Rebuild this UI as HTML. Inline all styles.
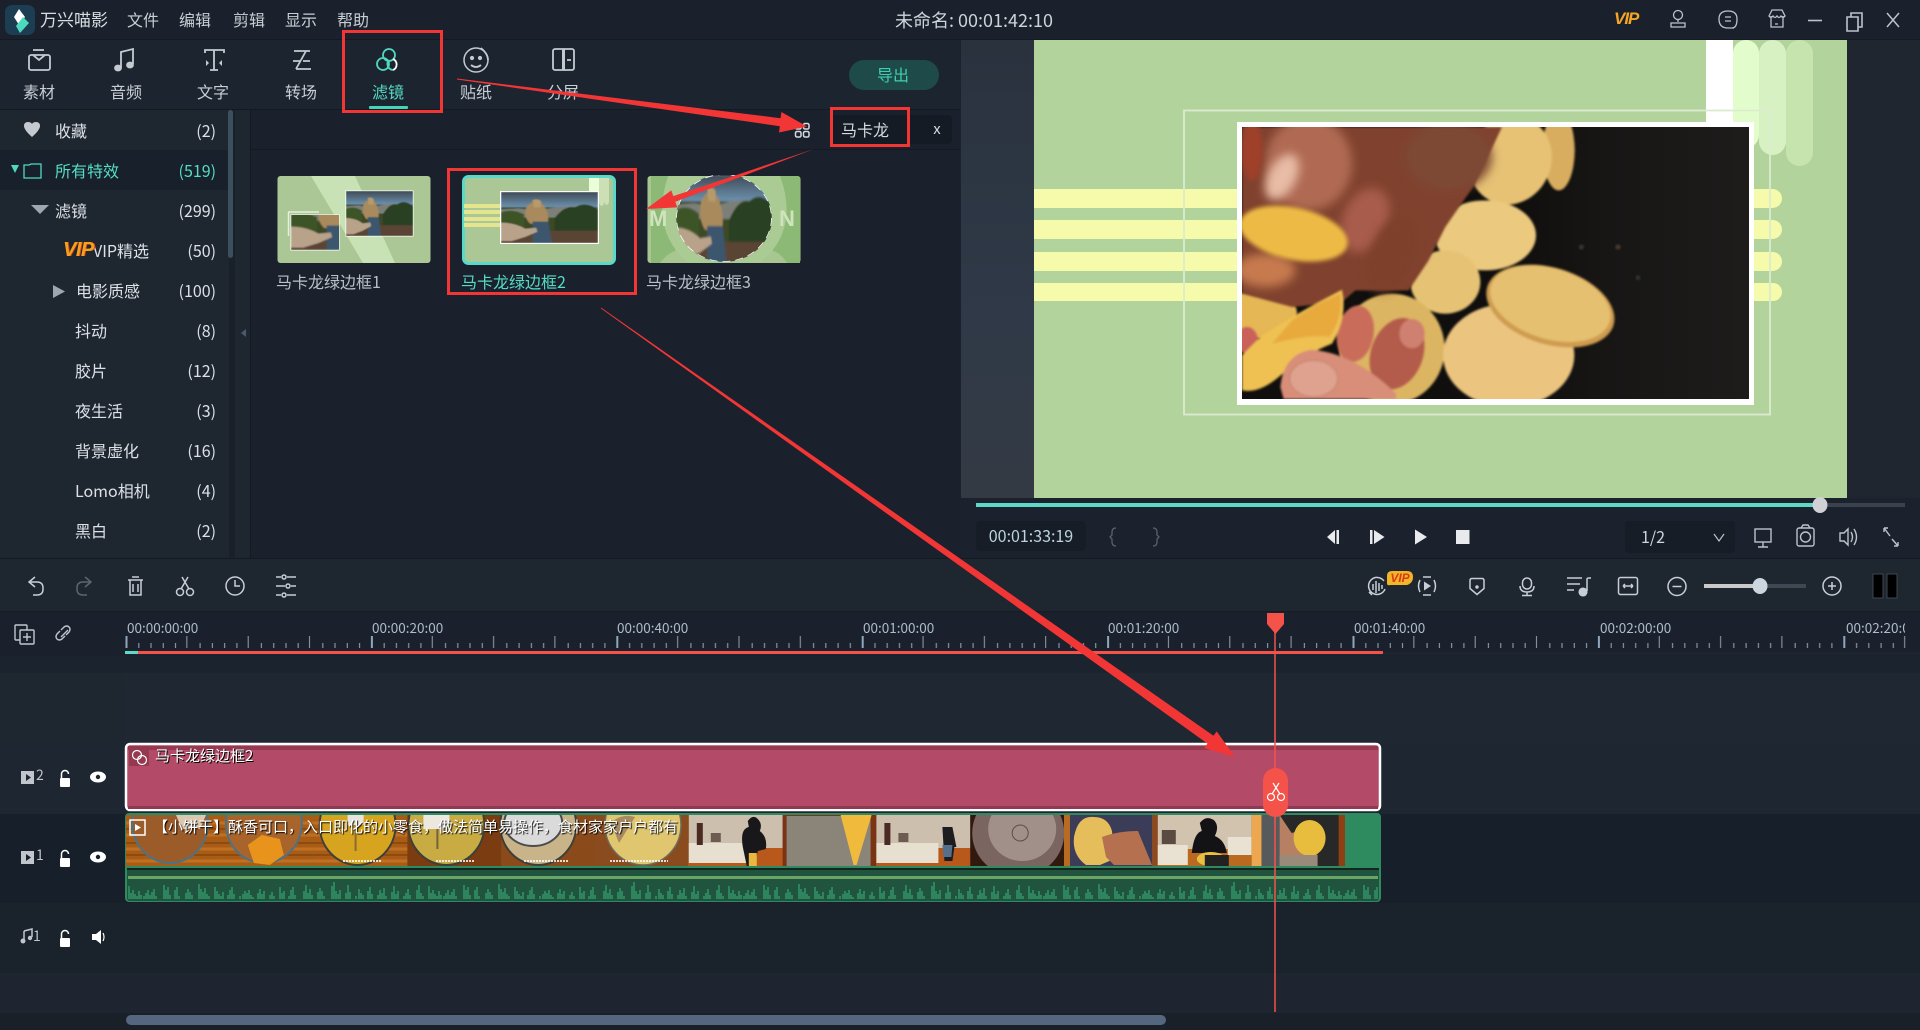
<!DOCTYPE html>
<html lang="zh"><head><meta charset="utf-8"><title>万兴喵影</title>
<style>
html,body{margin:0;padding:0;width:1920px;height:1030px;overflow:hidden;background:#1c232d}
body{font-family:"Noto Sans CJK SC","Liberation Sans",sans-serif;color:#c9ced5;position:relative}
svg{position:absolute;left:0;top:0}
.t{position:absolute;white-space:nowrap;line-height:20px;font-size:16px}
.c{transform:translateX(-50%)}
.r{transform:translateX(-100%)}
.m{color:#c9ced5}
.s{color:#dde1e6;font-size:16px}
.g{color:#55dcc4}
.rl{color:#aebccb;font-size:13.5px}
</style></head><body>
<svg width="1920" height="1030" viewBox="0 0 1920 1030">
<defs>
<filter id="b8" x="-50%" y="-50%" width="200%" height="200%"><feGaussianBlur stdDeviation="14"/></filter>
<filter id="b5" x="-30%" y="-30%" width="160%" height="160%"><feGaussianBlur stdDeviation="6"/></filter>
<filter id="b2" x="-10%" y="-10%" width="120%" height="120%"><feGaussianBlur stdDeviation="3"/></filter>
<filter id="b1" x="-10%" y="-10%" width="120%" height="120%"><feGaussianBlur stdDeviation="1.200"/></filter>
<clipPath id="strip"><rect x="126" y="815" width="1219" height="51"/></clipPath>
<linearGradient id="slate" x1="0" y1="0" x2="1" y2="0"><stop offset=".55" stop-color="#100f0e"/><stop offset=".72" stop-color="#171615"/><stop offset="1" stop-color="#1d1c1b"/></linearGradient>
<pattern id="ticks" patternUnits="userSpaceOnUse" x="125.5" y="636" width="245.4" height="12">
<path d="M1 0V12" stroke="#8fa6bb" stroke-width="2"/>
<path d="M61.35 0V12M122.7 0V12M184 0V12" stroke="#93a0ad" stroke-width="1"/>
<path d="M13.3 7V12M25.5 7V12M37.8 7V12M50 7V12M74.6 7V12M86.9 7V12M99.1 7V12M111.4 7V12M135.9 7V12M148.2 7V12M160.5 7V12M172.7 7V12M197.3 7V12M209.5 7V12M221.8 7V12M234 7V12" stroke="#8494a3" stroke-width="1.2"/>
</pattern>
<pattern id="wave" patternUnits="userSpaceOnUse" x="128" y="877" width="300" height="22">
<path d="M1 22v-13M3 22v-6M5 22v-9M7 22v-5M9 22v-3M11 22v-8M13 22v-4M16 22v-3M18 22v-6M20 22v-9M22 22v-4M24 22v-7M26 22v-10M28 22v-3M36 22v-14M38 22v-9M40 22v-12M42 22v-4M47 22v-9M49 22v-12M51 22v-3M58 22v-6M60 22v-10M62 22v-7M64 22v-4M71 22v-15M73 22v-10M75 22v-7M77 22v-11M79 22v-5M81 22v-3M87 22v-12M89 22v-8M91 22v-5M93 22v-3M95 22v-7M100 22v-4M102 22v-9M104 22v-12M106 22v-5M112 22v-3M115 22v-5M117 22v-8M119 22v-6M121 22v-9M123 22v-4M125 22v-2M130 22v-6M132 22v-10M134 22v-5M136 22v-8M142 22v-4M144 22v-7M146 22v-3M152 22v-12M154 22v-6M156 22v-8M161 22v-3M163 22v-9M165 22v-12M167 22v-4M176 22v-8M178 22v-14M180 22v-6M182 22v-10M184 22v-4M190 22v-7M192 22v-11M194 22v-8M196 22v-3M204 22v-13M206 22v-17M208 22v-8M210 22v-5M212 22v-9M218 22v-6M220 22v-14M222 22v-7M228 22v-3M231 22v-10M233 22v-6M235 22v-4M240 22v-8M242 22v-12M244 22v-5M250 22v-4M252 22v-9M254 22v-6M256 22v-11M258 22v-3M264 22v-7M266 22v-13M268 22v-5M270 22v-8M276 22v-3M278 22v-6M280 22v-10M282 22v-4M289 22v-9M291 22v-14M293 22v-6M295 22v-3" stroke="#2f8a60" stroke-width="1.800" fill="none"/>
</pattern>
<linearGradient id="sky" x1="0" y1="0" x2="0" y2="1"><stop offset="0" stop-color="#3f4a55"/><stop offset="1" stop-color="#6f97b5"/></linearGradient>
<symbol id="scene" viewBox="0 0 160 100" preserveAspectRatio="none">
<g filter="url(#b1)">
<rect width="160" height="32" fill="url(#sky)"/>
<rect y="30" width="160" height="70" fill="#3c4a28"/>
<path d="M0 34L30 32 60 36 90 30 120 28 160 32V50H0Z" fill="#7c7f78"/>
<path d="M88 52Q104 26 122 30Q140 18 160 34V82H88Z" fill="#2c4120"/>
<path d="M0 40Q18 32 38 44V70H0Z" fill="#3d5428"/>
<rect y="76" width="160" height="24" fill="#5a4534"/>
<path d="M42 30Q56 10 70 26Q82 44 76 66L48 62Q36 48 42 30Z" fill="#a98a5c"/>
<path d="M52 16Q60 12 66 18V30H54Z" fill="#b79a6a"/>
<path d="M52 58H78L84 100H52Z" fill="#3b566d"/>
<path d="M0 60Q22 60 40 72L58 70 60 78 40 88 18 96 0 96Z" fill="#b8a28a"/>
</g>
</symbol>
<symbol id="wood" viewBox="0 0 94 51">
<rect width="94" height="51" fill="#a95c16"/>
<path d="M0 8H94M0 20H94M0 34H94M0 46H94" stroke="#bf7022" stroke-width="3"/>
<path d="M0 14H94M0 28H94M0 40H94" stroke="#8f4a10" stroke-width="2"/>
</symbol>
</defs>

<!-- base regions -->
<rect width="1920" height="40" fill="#1a212c"/>
<rect y="40" width="960" height="70" fill="#1c2430"/>
<rect y="110" width="229" height="448" fill="#1e2630"/>
<rect x="229" y="110" width="6" height="448" fill="#1a2029"/>
<rect x="235" y="110" width="16" height="448" fill="#1e2630"/>
<rect x="251" y="110" width="709" height="448" fill="#1a212c"/>
<path d="M251 149.500H960M0 109.500H960M0 39.500H1920M250.500 110V558M0 558.500H1920" stroke="#141a22" stroke-width="1"/>
<rect y="150" width="229" height="40" fill="#18212b"/>
<rect x="228" y="110" width="5" height="148" rx="2.500" fill="#3c4f5f"/>
<path d="M246 329v8l-5-4z" fill="#4a5a6c"/>

<!-- preview -->
<rect x="960" y="40" width="960" height="518" fill="#1b222d"/>
<rect x="1847" y="40" width="73" height="458" fill="#1f2630"/>
<defs><linearGradient id="st" x1="0" y1="0" x2="0" y2="1"><stop offset="0" stop-color="#2a323e"/><stop offset=".6" stop-color="#2f3947"/><stop offset="1" stop-color="#343a44"/></linearGradient></defs>
<rect x="961" y="40" width="73" height="458" fill="url(#st)"/>
<rect x="1034" y="40" width="813" height="458" fill="#b3d39d"/>
<rect x="1786" y="40" width="27" height="126" rx="13.500" fill="#c5e4ae"/>
<rect x="1759" y="40" width="27" height="115" rx="13.500" fill="#d8f1c2"/>
<rect x="1733" y="40" width="26" height="108" rx="13" fill="#e3fccb"/>
<rect x="1706" y="40" width="27" height="90" fill="#fff"/>
<g fill="#f5fbaa"><path d="M1034 189H1772.500a9.500 9.500 0 0 1 0 19H1034Z"/><path d="M1034 220H1772.500a9.500 9.500 0 0 1 0 19H1034Z"/><path d="M1034 252H1772.500a9.500 9.500 0 0 1 0 19H1034Z"/><path d="M1034 283H1773a9 9 0 0 1 0 18H1034Z"/></g>
<rect x="1184" y="110.500" width="586" height="304" fill="none" stroke="#dcebd0" stroke-width="1.800"/>
<rect x="1237" y="122" width="517" height="283" fill="#fff"/>
<svg x="1242" y="127" width="507" height="272" viewBox="0 0 1521 816" preserveAspectRatio="none">
<rect width="1521" height="816" fill="url(#slate)"/>
<g filter="url(#b2)">
<ellipse cx="950" cy="70" rx="48" ry="120" fill="#d9ad5e"/>
<ellipse cx="805" cy="100" rx="122" ry="135" fill="#e7c274" transform="rotate(25 805 100)"/>
<ellipse cx="730" cy="325" rx="152" ry="105" fill="#ebc97f"/>
<ellipse cx="610" cy="465" rx="105" ry="95" fill="#e6c275"/>
<ellipse cx="450" cy="665" rx="158" ry="165" fill="#dcb564"/>
<ellipse cx="800" cy="685" rx="197" ry="155" fill="#ebc47f"/>
<ellipse cx="925" cy="537" rx="198" ry="115" fill="#cf9c50" transform="rotate(17 925 537)"/>
<ellipse cx="925" cy="530" rx="186" ry="106" fill="#e5c06f" transform="rotate(17 925 530)"/>
<ellipse cx="60" cy="560" rx="105" ry="75" fill="#e5b755"/>
</g>
<path d="M0 0H780L700 170 610 300 560 400 500 490H340L300 525 150 540 0 500Z" fill="#80432f" filter="url(#b2)"/>
<ellipse cx="620" cy="90" rx="130" ry="100" fill="#7d4a36" filter="url(#b8)"/>
<ellipse cx="200" cy="110" rx="130" ry="140" fill="#b06a52" filter="url(#b8)"/>
<ellipse cx="30" cy="70" rx="32" ry="90" fill="#9e3f2b" filter="url(#b5)"/>
<ellipse cx="120" cy="150" rx="42" ry="75" fill="#e8bca6" transform="rotate(28 120 150)" filter="url(#b8)"/>
<ellipse cx="370" cy="280" rx="68" ry="100" fill="#a85c4b" transform="rotate(22 370 280)" filter="url(#b8)"/>
<ellipse cx="450" cy="380" rx="65" ry="120" fill="#7e3f2c" transform="rotate(22 450 380)" filter="url(#b8)"/>
<ellipse cx="70" cy="430" rx="90" ry="50" fill="#c67a4e" filter="url(#b8)"/>
<ellipse cx="155" cy="320" rx="165" ry="78" fill="#edbb45" transform="rotate(12 155 320)" filter="url(#b5)"/>
<g filter="url(#b2)">
<ellipse cx="15" cy="640" rx="32" ry="40" fill="#c9605a"/>
<ellipse cx="340" cy="620" rx="55" ry="85" fill="#c96d5a" transform="rotate(10 340 620)"/>
<ellipse cx="465" cy="680" rx="78" ry="110" fill="#b45b4c" transform="rotate(20 465 680)"/>
<ellipse cx="510" cy="620" rx="38" ry="44" fill="#cf8070"/>
<path d="M300 488Q318 570 270 650Q190 680 110 750Q50 800 0 790V685L60 625 150 570 220 530Z" fill="#efc152"/>
<path d="M295 500Q305 570 262 630 210 620 90 650L150 580 220 535Z" fill="#e8aa3c"/>
<path d="M115 780Q125 680 210 668 340 680 462 800V816H125Z" fill="#d88e78"/>
<ellipse cx="215" cy="755" rx="72" ry="55" fill="#dfa28e" stroke="#c98a76" stroke-width="4"/>
</g>
<circle cx="1018" cy="360" r="8" fill="#3a3330" filter="url(#b2)"/><circle cx="1128" cy="360" r="8" fill="#4a3a2c" filter="url(#b2)"/><circle cx="1188" cy="452" r="7" fill="#3a3330" filter="url(#b2)"/>
</svg>

<!-- player bar -->
<rect x="976" y="503" width="929" height="4" fill="#3a424e"/>
<rect x="976" y="503" width="844" height="4" fill="#5fd8c8"/>
<ellipse cx="1820" cy="505" rx="7.500" ry="8" fill="#cfd1d4"/>
<rect x="976" y="521" width="110" height="30" rx="4" fill="#161d27"/>
<rect x="1625" y="521" width="110" height="32" rx="4" fill="#161d27"/>
<path d="M1116 528q-4 0-4 4v3l-2 2 2 2v3q0 4 4 4M1153 528q4 0 4 4v3l2 2-2 2v3q0 4-4 4" stroke="#59626e" stroke-width="1.300" fill="none"/>
<g fill="#e8eaee">
<path d="M1335 530v14l-8-7zM1336.500 530h2.500v14h-2.500z"/>
<path d="M1370 530h2.500v14h-2.500zM1374 530v14l10.500-7z"/>
<path d="M1415 529.500v15l12-7.500z"/>
<rect x="1456" y="530" width="13.500" height="14"/>
</g>
<g fill="none" stroke="#bcc3cc" stroke-width="1.400">
<path d="M1714 534l5 7 5-7" stroke-width="1.200"/>
<rect x="1755" y="529" width="16" height="13"/><path d="M1763 542v5M1758 547h10"/>
<rect x="1797" y="528" width="17" height="18" rx="2"/><circle cx="1805.500" cy="537" r="5"/><path d="M1801 528l2-3h5l2 3"/>
<path d="M1840 533h4l4-4v16l-4-4h-4zM1851 532q3 5 0 10M1854 529q5 8 0 16"/>
<path d="M1884 528l6 8M1884 528h4M1884 528v4M1898 546l-6-7M1898 546h-4M1898 546v-4"/>
</g>

<!-- toolbar -->
<rect y="559" width="1920" height="52" fill="#1e2630"/>
<path d="M0 611.500H1920" stroke="#161c24"/>
<g fill="none" stroke="#c9ced5" stroke-width="1.500">
<path d="M35 577l-6 5 6 5M29 582h8q6 0 6 6v1q0 6-6 6h-4"/>
<path d="M85 577l6 5-6 5M91 582h-8q-6 0-6 6v1q0 6 6 6h4" stroke="#5d6670"/>
<path d="M128 580h15M132 577h7M130 580v15h11v-15M133 584v8M138 584v8"/>
<circle cx="180" cy="592" r="3.500"/><circle cx="190" cy="592" r="3.500"/><path d="M181 589l7-12M189 589l-7-12"/>
<circle cx="235" cy="586" r="9"/><path d="M235 580v6h5"/>
<path d="M276 577h5M287 577h9M276 586h9M291 586h5M276 595h5M287 595h9"/><circle cx="284" cy="577" r="2"/><circle cx="288" cy="586" r="2"/><circle cx="284" cy="595" r="2"/>
<!-- right -->
<path d="M1384 581a8.500 8.500 0 1 0 1 8M1369 592l3 3M1373 584v6M1376 581v12M1379 583v8M1382 585v4"/>
<path d="M1420 580q-1.500 3-1.500 6t1.500 6M1434 580q1.500 3 1.500 6t-1.500 6M1423 577h8M1423 595h8"/>
<path d="M1424 581.500l7 4.500-7 4.500z" fill="#c9ced5" stroke="none"/>
<path d="M1472 578.500h10q2 0 2 2v8l-7 6-7-6v-8q0-2 2-2z"/><circle cx="1477" cy="587" r="1" fill="#c9ced5"/>
<rect x="1522.500" y="578" width="9" height="11" rx="4.500"/><path d="M1520 586q0 6 7 6t7-6M1527 592v3M1522 595.500h10"/>
<path d="M1567 578h15M1567 584h13M1567 590h7M1587 591v-12q0-1 2-1h2"/><circle cx="1583" cy="592" r="3.800" fill="#c9ced5"/>
<rect x="1618.500" y="577.500" width="19" height="17" rx="2"/><path d="M1623 586h10M1623 586l2-2M1623 586l2 2M1633 586l-2-2M1633 586l-2 2"/>
<circle cx="1677" cy="586.500" r="9"/><path d="M1672.500 586.500h9"/>
<circle cx="1832" cy="586" r="9"/><path d="M1828 586h8M1832 582v8"/>
</g>
<path d="M1392 571h15q6 0 6 6t-6 8h-17q-3 1-3-2v-7q0-5 5-5z" fill="#f4b427"/>
<rect x="1704" y="584" width="102" height="4" fill="#3e4753"/>
<rect x="1704" y="584" width="56" height="4" fill="#c9c9c9"/>
<ellipse cx="1760" cy="586" rx="7.500" ry="8" fill="#cdd5de"/>
<rect x="1873" y="574" width="10" height="24" fill="#000" stroke="#3e4650"/>
<rect x="1887" y="574" width="10" height="24" fill="#000" stroke="#3e4650"/>

<!-- ruler -->
<rect y="612" width="1920" height="44" fill="#1a212c"/>
<g fill="none" stroke="#c0c7cf" stroke-width="1.400">
<rect x="15" y="625" width="12" height="15" rx="1"/><rect x="20" y="630" width="14" height="14" rx="1" fill="#1a212c"/><path d="M27 633v8M23 637h8"/>
<path d="M61 630l3-3q3-2 5 0t0 5l-3 3M65 636l-3 3q-3 2-5 0t0-5l3-3M61 637l7-7"/>
</g>
<rect x="125.500" y="636" width="1780" height="12" fill="url(#ticks)"/>
<rect x="125" y="652" width="1795" height="3" fill="#1d2530"/>
<rect x="125" y="651" width="1258" height="3" fill="#f5524a"/>
<rect x="125" y="651" width="13" height="3" fill="#5fd8c8"/>

<!-- tracks -->
<rect y="656" width="1920" height="17" fill="#1b232e"/>
<rect y="673" width="1920" height="70" fill="#1f2732"/>
<rect y="673" width="124" height="70" fill="#1e2630"/>
<rect y="743" width="1920" height="71" fill="#1e2631"/>
<rect y="814" width="1920" height="89" fill="#171f2a"/>
<rect y="903" width="1920" height="70" fill="#1a222c"/>
<rect y="973" width="1920" height="40" fill="#1e2530"/>
<rect x="0" y="1013" width="1920" height="17" fill="#1a2028"/>

<!-- filter clip -->
<rect x="126" y="744" width="1254" height="66" rx="4" fill="#b34a67" stroke="#fff" stroke-width="2.500"/>
<rect x="128" y="746" width="1250" height="4" fill="#94394f"/>
<rect x="128" y="806" width="1250" height="3" fill="#8f3a52"/>
<rect x="129" y="750" width="20" height="16" fill="#94394f"/>
<circle cx="137" cy="755" r="4.500" fill="none" stroke="#fff" stroke-width="1.200"/><circle cx="142" cy="760" r="4.500" fill="none" stroke="#fff" stroke-width="1.200"/>

<!-- video clip -->
<rect x="125" y="813" width="1256" height="89" rx="4" fill="#2e8a5f"/>
<rect x="127" y="868" width="1252" height="2" fill="#14261f"/>
<path d="M127 870H1379V898q0 3-3 3H130q-3 0-3-3Z" fill="#20543f"/>
<rect x="128" y="876" width="1250" height="3" fill="#6ba566"/>
<rect x="128" y="880" width="1250" height="19" fill="url(#wave)"/>
<!-- thumbs -->
<g clip-path="url(#strip)">
<g transform="translate(126 815)"><use href="#wood" width="94" height="51"/><ellipse cx="44" cy="8" rx="38" ry="40" fill="#9c5c2a" stroke="#4a7388" stroke-width="2"/><path d="M50 0h30l-6 14H56z" fill="#dcc8b0"/></g>
<g transform="translate(219.800 815)"><use href="#wood" width="94" height="51"/><ellipse cx="44" cy="8" rx="38" ry="40" fill="#a9642c" stroke="#4a7388" stroke-width="2"/><path d="M28 30l14-10 18 4 4 16-14 10-16-2z" fill="#e8941c"/></g>
<g transform="translate(313.600 815)"><use href="#wood" width="94" height="51"/><ellipse cx="44" cy="10" rx="38" ry="40" fill="#d7a41f" stroke="#3c3f3a" stroke-width="2"/><rect x="34" width="16" height="10" fill="#e8e4dc"/><path d="M42 10v26" stroke="#8a6a30" stroke-width="2"/></g>
<g transform="translate(407.400 815)"><rect width="94" height="51" fill="#7a3c10"/><ellipse cx="39" cy="10" rx="38" ry="40" fill="#c8ab43" stroke="#3c3f3a" stroke-width="2"/><rect x="16" width="26" height="14" fill="#ece8e0"/><path d="M30 14v20" stroke="#77613a" stroke-width="2"/></g>
<g transform="translate(501.200 815)"><rect width="94" height="51" fill="#8a4a1a"/><ellipse cx="37" cy="10" rx="38" ry="40" fill="#c9b48a" stroke="#3c3f3a" stroke-width="2"/><ellipse cx="32" cy="8" rx="29" ry="23" fill="#dadada" stroke="#4c4c4c" stroke-width="2"/></g>
<g transform="translate(595 815)"><rect width="94" height="51" fill="#8a4c1f"/><ellipse cx="48" cy="10" rx="38" ry="40" fill="#dfc66f" stroke="#6c6c5c" stroke-width="1.500"/><path d="M16 8q10-10 24-6l-16 26z" fill="#a88a60"/></g>
<g stroke="#fff" stroke-width="2" stroke-dasharray="2 1" opacity=".8"><path d="M343 861h38M436 861h38M524 861h44M610 861h58"/></g>
<!-- kitchen etc -->
<g transform="translate(688.800 815)"><rect width="94" height="51" fill="#cdbfae"/><rect y="33" width="94" height="18" fill="#b8591b"/><rect y="28" width="62" height="20" fill="#e7e0d0"/><rect x="8" y="8" width="6" height="22" fill="#4a2a22"/><rect x="22" y="18" width="10" height="9" fill="#6d5b52"/><path d="M54 32q-3-18 6-20l-1-6q5-7 10-2 5 5 2 12 8 6 6 18l-8 2-3 15h-8z" fill="#18171a"/><rect x="60" y="38" width="8" height="13" fill="#e8b840"/></g>
<g transform="translate(782.600 815)"><rect width="94" height="51" fill="#7a3413"/><rect x="4" y="1" width="84" height="50" fill="#8a8479"/><path d="M58 0h31L74 50h-3z" fill="#f0bb3c"/></g>
<g transform="translate(876.400 815)"><rect width="94" height="51" fill="#cdbfae"/><rect y="33" width="94" height="18" fill="#b8591b"/><rect y="28" width="62" height="20" fill="#e7e0d0"/><rect x="8" y="8" width="6" height="22" fill="#4a2a22"/><rect x="22" y="18" width="10" height="9" fill="#6d5b52"/><path d="M66 12h10l4 20-2 0-2 14h-8z" fill="#1d1c1f"/><path d="M66 30h10l-1 12h-8z" fill="#54708c"/></g>
<g transform="translate(970.200 815)"><rect width="94" height="51" fill="#31190f"/><ellipse cx="48" cy="18" rx="46" ry="44" fill="#7a6560"/><ellipse cx="52" cy="14" rx="34" ry="32" fill="#a1908a"/><circle cx="50" cy="18" r="8" fill="none" stroke="#5c4c48"/></g>
<g transform="translate(1064 815)"><rect width="94" height="51" fill="#3b3d58"/><rect width="6" height="51" fill="#b86a20"/><rect x="88" width="6" height="51" fill="#8c4a20"/><path d="M10 22q4-22 20-20 14 0 18 14l2 28-14 6H22q-14-10-12-28z" fill="#e6bd5b"/><path d="M38 22q16-6 36-6l14 34H50l-8-8z" fill="#b5704f"/></g>
<g transform="translate(1157.800 815)"><rect width="94" height="51" fill="#d1c3ae"/><rect y="34" width="94" height="17" fill="#ba6a20"/><rect y="30" width="30" height="20" fill="#e9e2d2"/><rect x="70" y="22" width="24" height="18" fill="#e9e2d2"/><rect x="4" y="15" width="14" height="14" fill="#5a4b42"/><path d="M34 38q2-20 10-22l-2-8q6-8 14-3 6 6 1 16 10 4 12 17z" fill="#131214"/><ellipse cx="53" cy="44" rx="14" ry="7" fill="#e7c040"/><rect x="47" y="40" width="24" height="11" fill="#222"/></g>
<g transform="translate(1251.600 815)"><rect width="94" height="51" fill="#282828"/><rect width="10" height="51" fill="#eca750"/><rect x="10" width="18" height="51" fill="#565a5c"/><rect x="87" width="7" height="51" fill="#8e3f14"/><path d="M28 0l12 18 20-6 10 22-14 17H28z" fill="#b88063"/><ellipse cx="58" cy="23" rx="16" ry="18" fill="#e8bd3e"/><rect x="28" y="40" width="38" height="11" fill="#9a8a7a"/></g>
</g>

<!-- scrollbar -->
<rect x="126" y="1015" width="1040" height="10" rx="5" fill="#55677f"/>

<!-- track headers -->
<g id="hdr">
<rect x="21" y="771" width="13" height="13" fill="#c1c6cc"/><path d="M26 774v7l5-3.500z" fill="#1e2630"/>
<rect x="60" y="778" width="10" height="9" rx="1" fill="#fff"/><path d="M61.500 778v-4a3.500 3.500 0 0 1 7 0" fill="none" stroke="#fff" stroke-width="1.500"/>
<ellipse cx="98" cy="777" rx="8" ry="5.500" fill="#fff"/><circle cx="98" cy="777" r="2.200" fill="#1e2630"/>
</g>
<g>
<rect x="21" y="851" width="13" height="13" fill="#c1c6cc"/><path d="M26 854v7l5-3.500z" fill="#171f2a"/>
<rect x="60" y="858" width="10" height="9" rx="1" fill="#fff"/><path d="M61.500 858v-4a3.500 3.500 0 0 1 7 0" fill="none" stroke="#fff" stroke-width="1.500"/>
<ellipse cx="98" cy="857" rx="8" ry="5.500" fill="#fff"/><circle cx="98" cy="857" r="2.200" fill="#171f2a"/>
</g>
<g>
<path d="M24 931l8-2v8" fill="none" stroke="#c1c6cc" stroke-width="1.500"/><circle cx="23" cy="941" r="2.500" fill="#c1c6cc"/><path d="M24 931v10" stroke="#c1c6cc" stroke-width="1.500"/><circle cx="30" cy="938" r="2.200" fill="#c1c6cc"/>
<rect x="60" y="938" width="10" height="9" rx="1" fill="#fff"/><path d="M61.500 938v-4a3.500 3.500 0 0 1 7 0" fill="none" stroke="#fff" stroke-width="1.500"/>
<path d="M92 934h4l5-4v14l-5-4h-4z" fill="#fff"/><path d="M103 933q2 4 0 8" fill="none" stroke="#fff" stroke-width="1.200"/>
</g>

<!-- title bar icons -->
<rect x="5" y="5" width="30" height="30" rx="7" fill="#1c3d52"/>
<path d="M19 9l6 8-6 8z" fill="#fff"/><path d="M19 9l-5 8 5 8z" fill="#fff"/>
<path d="M23 17l6 6-9 10-4-7z" fill="#4ddbc0"/>
<g fill="none" stroke="#bcc3cb" stroke-width="1.300">
<circle cx="1678" cy="15" r="4.500"/><path d="M1678 20v2M1671 23h14v4h-14zM1671 27h14"/>
<path d="M1728 11q9 0 9 8 0 9-5 9l2 0q-6 0-6 0-9 0-9-9 0-8 9-8zM1725 17h6M1725 21h6"/>
<path d="M1771 16v11h12v-11M1769 16l3-6h10l3 6q-2 3-4 0-2 3-4 0-2 3-4 0-2 3-4 0zM1775 24h3"/>
<path d="M1808 20.500h14" stroke-width="1.600"/>
<path d="M1847 17h11v14h-11zM1851 17v-4h11v14h-4" stroke-width="1.600"/>
<path d="M1887 13l12 14M1899 13l-12 14" stroke-width="1.500"/>
</g>

<!-- tab icons -->
<g fill="none" stroke="#c5cad1" stroke-width="1.800">
<rect x="29" y="55" width="21" height="15" rx="2"/><path d="M33 55l6 5 6-5M33 50h11"/>
<path d="M121 68V52l12-3v15"/><ellipse cx="118" cy="68" rx="3" ry="2.500" fill="#c5cad1"/><ellipse cx="130" cy="65" rx="3" ry="2.500" fill="#c5cad1"/>
<path d="M205 53v-3h19v3M214 50v20M210 70h8"/><path d="M206 60l3 3-3 3zM222 60l-3 3 3 3z" fill="#c5cad1" stroke="none"/>
<path d="M294 51h16M306 51l-10 18M296 69h15M293 61h8M303 61h7"/>
<circle cx="476" cy="60" r="12" stroke-width="1.500"/><path d="M471 65q5 4 10 0M481 48q7 6 7 12"/><circle cx="472" cy="58" r="1.200" fill="#c5cad1"/><circle cx="480" cy="58" r="1.200" fill="#c5cad1"/>
<rect x="553" y="49" width="21" height="21" rx="2"/><path d="M563.500 49v21" stroke-width="3"/><path d="M567 60h4"/>
</g>
<g fill="none" stroke="#4fd8bf" stroke-width="1.800">
<circle cx="389" cy="55" r="6"/><circle cx="383" cy="64" r="6"/><path d="M393 59a6 6 0 0 1 0 11" stroke="#fff"/><path d="M389 60a6 6 0 0 0 4 10" />
</g>
<rect x="369" y="106" width="39" height="3" rx="1" fill="#42d5ba"/>
<rect x="849" y="60" width="90" height="30" rx="15" fill="#1f4a4a"/>

<!-- sidebar icons -->
<path d="M32 137q-8-7-8-11 0-4 4-4 3 0 4 2 1-2 4-2 4 0 4 4 0 4-8 11z" fill="#c5cad1"/>
<path d="M11 165h8l-4 8z" fill="#4fd8bf"/>
<path d="M24 165v13h17v-14h-10l-2 1z" fill="none" stroke="#4fd8bf" stroke-width="1.300"/>
<path d="M31 205h18l-9 9z" fill="#9ea7b1"/>
<path d="M53 285l12 6.500-12 6.500z" fill="#9ea7b1"/>

<!-- search -->
<rect x="830" y="115" width="122" height="29" rx="4" fill="#151b24"/>
<g fill="none" stroke="#d6dade" stroke-width="1.500"><rect x="795.500" y="123.500" width="5.500" height="5.500" rx="1.500"/><rect x="803.500" y="123.500" width="5.500" height="5.500" rx="1.500"/><rect x="795.500" y="131.500" width="5.500" height="5.500" rx="1.500"/><rect x="803.500" y="131.500" width="5.500" height="5.500" rx="1.500"/></g>

<!-- gallery thumbs -->
<rect x="277.500" y="176" width="153" height="87" rx="3" fill="#aac795"/>
<path d="M311 176h44l40 87h-32z" fill="#c9e2b5"/>
<path d="M288 212h31M288.500 212v24" stroke="#e7efdf" stroke-width="1.500" fill="none"/>
<rect x="345.500" y="190.500" width="68" height="46" fill="#fff"/>
<use href="#scene" x="346" y="191" width="67" height="45"/>
<rect x="290.500" y="214.500" width="49" height="36" fill="#fff"/>
<svg x="291" y="215" width="48" height="35" viewBox="0 40 70 60" preserveAspectRatio="none"><use href="#scene" width="160" height="100"/></svg>
<rect x="463.500" y="176.500" width="151" height="87" rx="5" fill="#aac795" stroke="#58d9c9" stroke-width="3"/>
<path d="M589 178h10v28h-10z" fill="#eaffd8"/><path d="M599 178h5v25q-2 6-5 0zM604 178h5v24q-2 6-5 0z" fill="#cde0b5"/>
<g fill="#e6e58f"><rect x="464" y="204" width="134" height="4"/><rect x="464" y="210" width="134" height="4"/><rect x="464" y="217" width="134" height="4"/><rect x="464" y="223" width="134" height="4"/></g>
<rect x="500" y="191" width="99" height="53" fill="#fff"/>
<use href="#scene" x="501" y="192" width="97" height="51"/>
<rect x="647.500" y="176" width="153" height="87" rx="3" fill="#a8c690"/>
<path d="M651 176H797q3 0 3 3V263H787Q770 235 724 262 680 235 660 263H651Z" fill="#8cb976"/>
<path d="M668 176H780Q800 230 760 263H688Q650 230 668 176Z" fill="#aacb94"/>
<text x="649" y="226" font-family="Liberation Sans,sans-serif" font-weight="bold" font-size="22" fill="#cfe3bd">M</text>
<text x="779" y="226" font-family="Liberation Sans,sans-serif" font-weight="bold" font-size="22" fill="#cfe3bd">N</text>
<svg x="676" y="175" width="96" height="88" viewBox="0 0 96 88"><defs><clipPath id="ov"><ellipse cx="48" cy="43" rx="48" ry="44"/></clipPath></defs><g clip-path="url(#ov)"><use href="#scene" width="96" height="88"/></g><ellipse cx="48" cy="43" rx="47.500" ry="43.500" fill="none" stroke="#fff" stroke-width=".8" stroke-dasharray="8 5"/></svg>
</svg>

<!-- text: title bar -->
<div class="t" style="left:40px;top:9px;font-size:17px;color:#d9dde2">万兴喵影</div>
<div class="t m" style="left:127px;top:8.500px">文件</div>
<div class="t m" style="left:179px;top:8.500px">编辑</div>
<div class="t m" style="left:233px;top:8.500px">剪辑</div>
<div class="t m" style="left:285px;top:8.500px">显示</div>
<div class="t m" style="left:337px;top:8.500px">帮助</div>
<div class="t" style="left:895px;top:10px;font-size:18px;color:#d0d4da">未命名: 00:01:42:10</div>
<div class="t" style="left:1614px;top:8px;font:italic bold 17px/22px 'Liberation Sans',sans-serif;letter-spacing:-1px;color:#f6a623">VIP</div>

<!-- tab labels -->
<div class="t m c" style="left:39px;top:81px">素材</div>
<div class="t m c" style="left:126px;top:81px">音频</div>
<div class="t m c" style="left:213px;top:81px">文字</div>
<div class="t m c" style="left:301px;top:81px">转场</div>
<div class="t g c" style="left:388px;top:81px">滤镜</div>
<div class="t m c" style="left:476px;top:81px">贴纸</div>
<div class="t m c" style="left:563px;top:81px">分屏</div>
<div class="t g c" style="left:893px;top:64px;color:#3fcfae">导出</div>

<!-- sidebar -->
<div class="t s" style="left:55px;top:120px">收藏</div><div class="t s r" style="left:216px;top:120px">(2)</div>
<div class="t s g" style="left:55px;top:160px;color:#55dcc4">所有特效</div><div class="t s r" style="left:216px;top:160px;color:#55dcc4">(519)</div>
<div class="t s" style="left:55px;top:200px">滤镜</div><div class="t s r" style="left:216px;top:200px">(299)</div>
<div class="t s" style="left:93px;top:240px">VIP精选</div><div class="t s r" style="left:216px;top:240px">(50)</div>
<div class="t" style="left:63px;top:239px;font:italic 900 20px/22px 'Liberation Sans',sans-serif;color:#f7a01c;text-shadow:1px 0 0 #d8431a;letter-spacing:-.5px">VIP</div>
<div class="t s" style="left:76px;top:280px">电影质感</div><div class="t s r" style="left:216px;top:280px">(100)</div>
<div class="t s" style="left:75px;top:320px">抖动</div><div class="t s r" style="left:216px;top:320px">(8)</div>
<div class="t s" style="left:75px;top:360px">胶片</div><div class="t s r" style="left:216px;top:360px">(12)</div>
<div class="t s" style="left:75px;top:400px">夜生活</div><div class="t s r" style="left:216px;top:400px">(3)</div>
<div class="t s" style="left:75px;top:440px">背景虚化</div><div class="t s r" style="left:216px;top:440px">(16)</div>
<div class="t s" style="left:75px;top:480px">Lomo相机</div><div class="t s r" style="left:216px;top:480px">(4)</div>
<div class="t s" style="left:75px;top:520px">黑白</div><div class="t s r" style="left:216px;top:520px">(2)</div>

<!-- search and gallery labels -->
<div class="t" style="left:841px;top:119px;color:#d5d9de">马卡龙</div>
<div class="t c" style="left:937px;top:119px;color:#d5d9de;font-size:15px">x</div>
<div class="t" style="left:276px;top:271px;color:#b9c0c8">马卡龙绿边框1</div>
<div class="t g" style="left:461px;top:271px;color:#55dcc4">马卡龙绿边框2</div>
<div class="t" style="left:646px;top:271px;color:#b9c0c8">马卡龙绿边框3</div>

<!-- player text -->
<div class="t c" style="left:1031px;top:525px;color:#bcd3e0">00:01:33:19</div>
<div class="t" style="left:1641px;top:526px;color:#cfd6dc">1/2</div>
<div class="t c" style="left:1400px;top:568px;font:italic bold 12px/20px 'Liberation Sans',sans-serif;color:#d73a17">VIP</div>

<!-- ruler labels -->
<div class="t rl" style="left:127px;top:617px">00:00:00:00</div>
<div class="t rl" style="left:372px;top:617px">00:00:20:00</div>
<div class="t rl" style="left:617px;top:617px">00:00:40:00</div>
<div class="t rl" style="left:863px;top:617px">00:01:00:00</div>
<div class="t rl" style="left:1108px;top:617px">00:01:20:00</div>
<div class="t rl" style="left:1354px;top:617px">00:01:40:00</div>
<div class="t rl" style="left:1600px;top:617px">00:02:00:00</div>
<div style="position:absolute;left:1846px;top:617px;width:59px;height:20px;overflow:hidden"><div class="t rl" style="position:relative">00:02:20:00</div></div>

<!-- track labels -->
<div class="t" style="left:36px;top:765px;font-size:14px;color:#c1c6cc">2</div>
<div class="t" style="left:36px;top:845px;font-size:14px;color:#c1c6cc">1</div>
<div class="t" style="left:33px;top:926px;font-size:14px;color:#c1c6cc">1</div>
<div class="t" style="left:155px;top:746px;font-size:15px;color:#fff;text-shadow:1px 1px 0 #000">马卡龙绿边框2</div>
<div class="t" style="left:153px;top:817px;font-size:15px;color:#fff;text-shadow:1px 1px 1px #000">【小饼干】酥香可口，入口即化的小零食，做法简单易操作，食材家家户户都有</div>

<!-- top overlay -->
<svg width="1920" height="1030" viewBox="0 0 1920 1030">
<rect x="130" y="820" width="15" height="15" fill="none" stroke="#fff" stroke-width="1.500"/><path d="M135 824v7l6-3.500z" fill="#fff"/>
<path d="M1275 630V1012" stroke="#f5524a" stroke-width="1.500"/>
<path d="M1267 613h17v11l-8.500 10-8.500-10z" fill="#f5524a"/>
<rect x="1263" y="768" width="25" height="49" rx="12.500" fill="#f5524a"/>
<g fill="none" stroke="#fff" stroke-width="1.200"><circle cx="1271" cy="797" r="3.500"/><circle cx="1281" cy="797" r="3.500"/><path d="M1272 794l7-11M1280 794l-7-11"/></g>
<g fill="none" stroke="#f23636" stroke-width="3">
<rect x="343.500" y="31.500" width="98" height="80"/>
<rect x="831.500" y="108.500" width="77" height="37"/>
<rect x="448.500" y="169.500" width="187" height="124"/>
</g>
<g fill="#f23636">
<polygon points="457,78.500 780.500,118.200 781.400,112 807,126.500 779,132.500 779.800,126.200 457,79.500"/>
<polygon points="814,149 673.300,196.100 671.300,190.400 646,209 677.300,207.400 675.300,201.700"/>
<polygon points="601,307.500 1213.500,735.800 1216.700,731.400 1235,757 1204.300,748 1207.500,743.600 601,308.500"/>
</g>
</svg>
</body></html>
